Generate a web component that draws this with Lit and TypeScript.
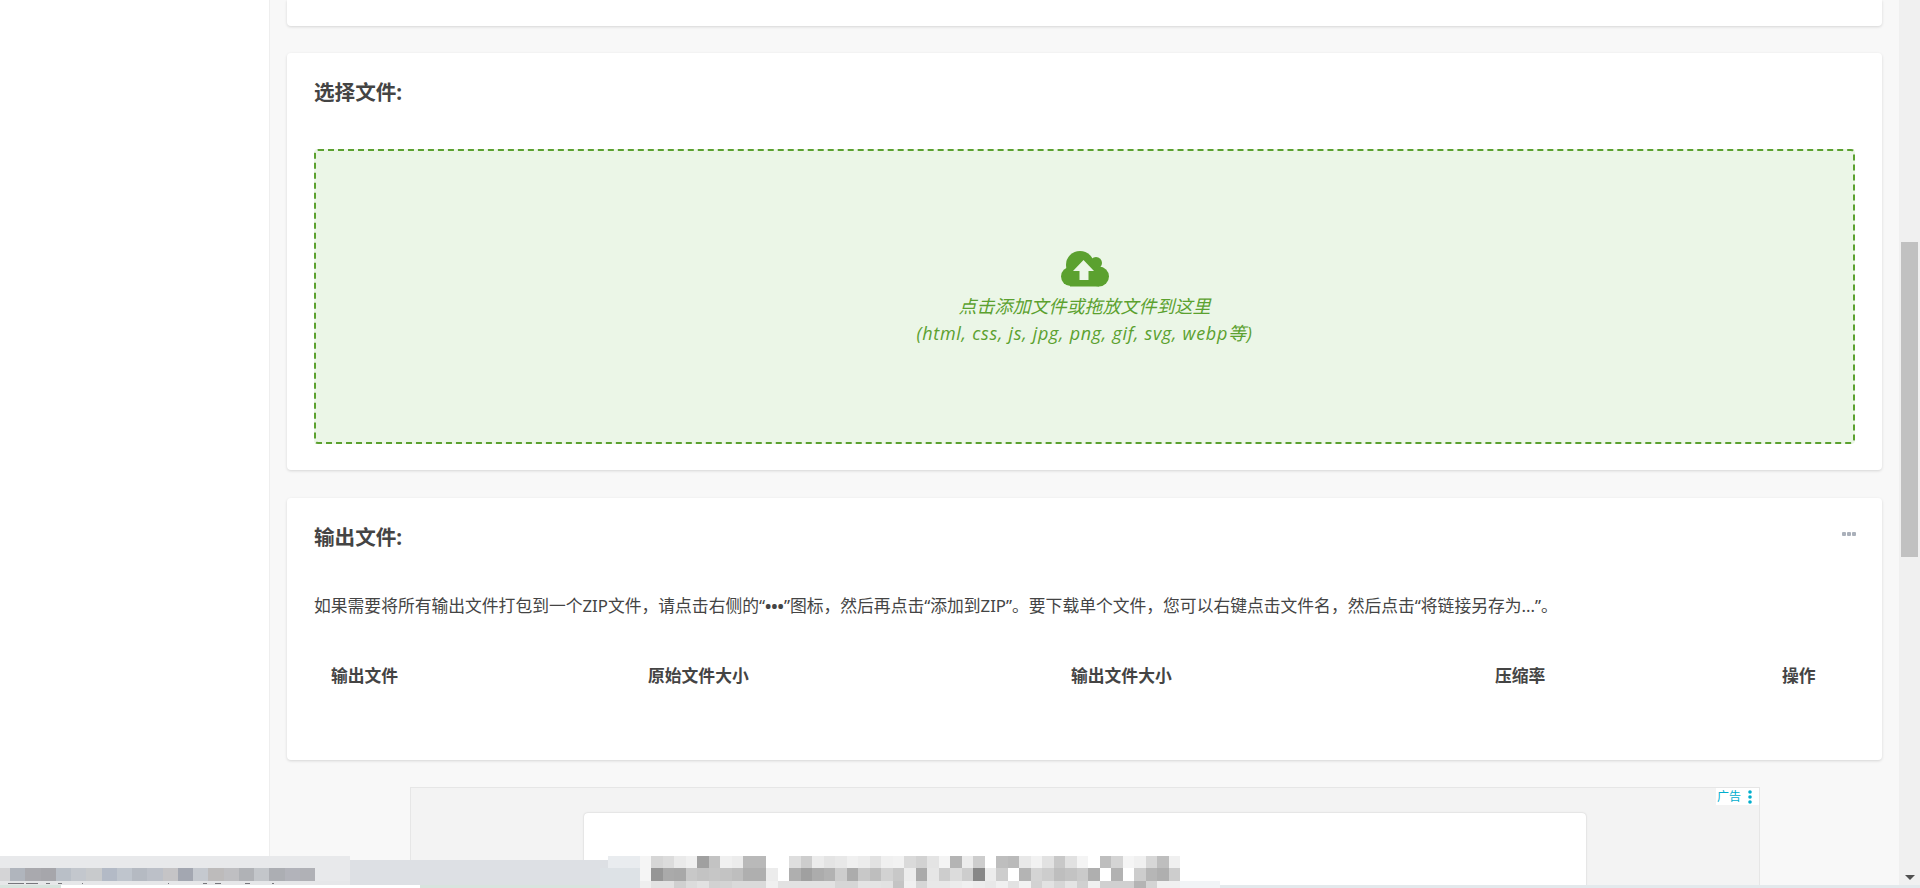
import { LitElement, html, css } from "lit";
import { customElement } from "lit/decorators.js";

const hex = (n: number) => { const h = n.toString(16).padStart(2, "0"); return `#${h}${h}${h}`; };
const top = [245,214,220,234,240,160,195,240,236,185,185,255,255,222,205,236,228,232,240,236,226,240,242,218,210,228,244,180,236,205,255,190,186,232,242,226,200,225,244,255,190,212,245,240,215,190,240];
const mid = [245,150,170,168,200,195,198,195,190,175,175,236,255,175,160,172,178,205,172,200,190,210,200,236,170,230,205,220,205,135,236,205,255,180,212,205,190,195,202,175,255,178,255,205,182,175,205];
const bot = [238,226,226,208,220,226,210,212,218,218,218,240,226,226,226,226,226,214,214,228,228,226,196,240,214,232,232,236,240,236,232,240,226,242,210,226,214,228,208,240,208,208,208,180,212,240,240];
const leftMid = ["#b0b5bd","#a9a9ae","#a6a6ab","#b9bfc7","#c3c7cd","#c8cacc","#b3bac6","#bfc5cd","#b5bac2","#bcc0c8","#c5c4c6","#a3a7b1","#c5c9cf","#bdbbbb","#bfbfc2","#b0b2b6","#c3c6ca","#acaeb3","#b2b3ba","#b0b1b6"];
const ticks: [number, number][] = [[8,16],[26,12],[46,4],[58,4],[82,1],[168,1],[203,4],[215,6],[245,5],[272,2]];

@customElement("app-root")
export class AppRoot extends LitElement {
  static styles = css`
    :host { display: block; height: 888px; overflow: hidden; position: relative; background: #f8f8f8;
      font-family: "Noto Sans", "Noto Sans CJK SC", sans-serif; color: #444; }
    .page { display: flex; height: 888px; }
    .side { width: 269px; flex: none; background: #fff; border-right: 1px solid #eee; }
    .main { flex: 1; min-width: 0; padding: 0 17px; display: flex; flex-direction: column; overflow: hidden; }
    .bar { width: 21px; flex: none; background: #f0f0f0; position: relative; display: flex; flex-direction: column; align-items: center; }
    .thumb { margin-top: 242px; width: 17px; height: 315px; background: #c1c1c1; }
    .arrow { position: absolute; top: 875px; left: 6px; width: 0; height: 0; border: 5px solid transparent; border-top: 5px solid #505050; border-bottom: 0; }
    .card { background: #fff; border-radius: 4px; box-shadow: 0 1px 3px rgba(0,0,0,.14); flex: none; }
    .stub { height: 26px; border-radius: 0 0 4px 4px; margin-bottom: 27px; }
    .pick { height: 417px; padding: 0 27px; margin-bottom: 28px; box-sizing: border-box; }
    .title { height: 96px; display: flex; align-items: flex-start; padding-top: 24px; box-sizing: border-box; font-size: 20.6px; font-weight: 700; line-height: 30px; color: #444; justify-content: space-between; }
    .drop { height: 295px; box-sizing: border-box; border: 2px dashed #5ba12f; border-radius: 4px; background: #ebf6e7;
      color: #5ba12f; font-style: italic; font-size: 18px; line-height: 27px; display: flex; flex-direction: column; align-items: center; padding-top: 100px; }
    .drop svg { width: 48px; height: 36px; margin-bottom: 6px; flex: none; }
    .types { font-family: "Open Sans", "Noto Sans CJK SC", sans-serif; letter-spacing: .7px; }
    .output { height: 262px; padding: 0 27px; box-sizing: border-box; margin-bottom: 27px; }
    .outtitle { height: 95px; }
    .dots { width: 14px; height: 4px; margin: 10px -1px 0 0; flex: none; display: flex; gap: 1px; }
    .dots i { width: 4px; height: 4px; background: #aab0ba; border-radius: 1px; }
    .para { font-size: 16.8px; line-height: 26px; height: 26px; white-space: nowrap; color: #444; margin: 0 0 44px; }
    .q { font-weight: 700; }
    .thead { display: grid; grid-template-columns: 317px 423px 424px 287px 90px; font-size: 16.8px; font-weight: 700; line-height: 26px; color: #444; }
    .thead span { padding-left: 17px; }
    .ad { flex: none; margin-left: 123px; width: 1350px; height: 101px; box-sizing: border-box; background: #f3f3f3; border: 1px solid #e6e6e6; position: relative; display: flex; justify-content: center; padding-top: 25px; }
    .adinner { width: 1002px; height: 80px; background: #fff; border-radius: 4px; box-shadow: 0 0 2px rgba(0,0,0,.2); }
    .adtag { position: absolute; top: 0; right: 0; height: 17px; width: 43px; background: #fff; color: #00aecd; font-size: 12px; line-height: 17px; display: flex; align-items: center; gap: 7px; padding-left: 1px; box-sizing: border-box; }
    .adtag svg { width: 4px; height: 14px; flex: none; }
    .cover { position: absolute; left: 0; right: 0; bottom: 0; height: 32px; overflow: hidden; }
    .cband { position: absolute; left: 0; top: 0; width: 350px; height: 12px; background: #e8e9eb; }
    .cband2 { position: absolute; left: 0; top: 12px; width: 315px; height: 13px; display: flex; background: #d4d4d6; padding-left: 10px; box-sizing: border-box; }
    .cband2 i { flex: 1; }
    .cband3 { position: absolute; left: 350px; top: 4px; width: 260px; height: 28px; background: #dde0e4; }
    .cband4 { position: absolute; left: 0; top: 25px; width: 350px; height: 7px; background: #e6e7e9; }
    .cband4b { position: absolute; left: 315px; top: 12px; width: 35px; height: 13px; background: #e8e9eb; }
    .cgreen { position: absolute; left: 0; top: 29px; width: 611px; height: 3px; background: #d8e4de; }
    .cwhite { position: absolute; left: 61px; top: 29px; width: 359px; height: 3px; background: #fff; }
    .tick { position: absolute; top: 27px; height: 1px; background: #77777c; }
    .cband5 { position: absolute; left: 608px; top: 0; width: 32px; height: 12px; background: #e9ecef; }
    .cband5b { position: absolute; left: 600px; top: 12px; width: 40px; height: 20px; background: #dde2e6; }
    .cband6 { position: absolute; left: 1180px; top: 25px; width: 40px; height: 7px; background: #f1f4f6; }
    .cband7 { position: absolute; left: 1220px; top: 29px; width: 700px; height: 3px; background: #e3e9ec; }
    .mosaic { position: absolute; left: 640px; top: 0; width: 540px; height: 32px; display: grid; grid-template-rows: 12px 13px 7px; grid-template-columns: repeat(47, 1fr); background: #fff; }
    .mosaic i { display: block; }
  `;

  render() {
    const dotsSvg = html`<svg viewBox="0 0 4 14"><circle cx="2" cy="2" r="1.8" fill="#00aecd"/><circle cx="2" cy="7" r="1.8" fill="#00aecd"/><circle cx="2" cy="12" r="1.8" fill="#00aecd"/></svg>`;
    return html`
      <div class="page">
        <div class="side"></div>
        <div class="main">
          <div class="card stub"></div>
          <section class="card pick">
            <div class="title">选择文件:</div>
            <div class="drop">
              <svg viewBox="0 0 48 36">
                <g fill="#5ba12f">
                  <circle cx="19" cy="14" r="14"/>
                  <circle cx="35" cy="12" r="6"/>
                  <circle cx="9.500" cy="25.500" r="9.500"/>
                  <circle cx="38" cy="25.500" r="10"/>
                  <rect x="9" y="15" width="29" height="20.500"/>
                </g>
                <path fill="#ebf6e7" d="M22.500 9 33 20h-5.500v9h-9v-9H12z"/>
              </svg>
              <div>点击添加文件或拖放文件到这里</div>
              <div class="types">(html, css, js, jpg, png, gif, svg, webp等)</div>
            </div>
          </section>
          <section class="card output">
            <div class="title outtitle"><span>输出文件:</span><div class="dots"><i></i><i></i><i></i></div></div>
            <p class="para">如果需要将所有输出文件打包到一个ZIP文件，请点击右侧的“<span class="q">•••</span>”图标，然后再点击“添加到ZIP”。要下载单个文件，您可以右键点击文件名，然后点击“将链接另存为...”。</p>
            <div class="thead"><span>输出文件</span><span>原始文件大小</span><span>输出文件大小</span><span>压缩率</span><span>操作</span></div>
          </section>
          <div class="ad"><div class="adinner"></div><div class="adtag">广告 ${dotsSvg}</div></div>
        </div>
        <div class="bar"><div class="thumb"></div><div class="arrow"></div></div>
      </div>
      <div class="cover">
        <div class="cband3"></div>
        <div class="cband"></div>
        <div class="cband4"></div>
        <div class="cband4b"></div>
        <div class="cband2">${leftMid.map((c) => html`<i style="background:${c}"></i>`)}</div>
        <div class="cgreen"></div>
        <div class="cwhite"></div>
        ${ticks.map(([x, w]) => html`<div class="tick" style="left:${x}px;width:${w}px"></div>`)}
        <div class="cband5"></div>
        <div class="cband5b"></div>
        <div class="cband6"></div>
        <div class="cband7"></div>
        <div class="mosaic">
          ${[...top, ...mid, ...bot].map((v) => html`<i style="background:${hex(v)}"></i>`)}
        </div>
      </div>
    `;
  }
}
